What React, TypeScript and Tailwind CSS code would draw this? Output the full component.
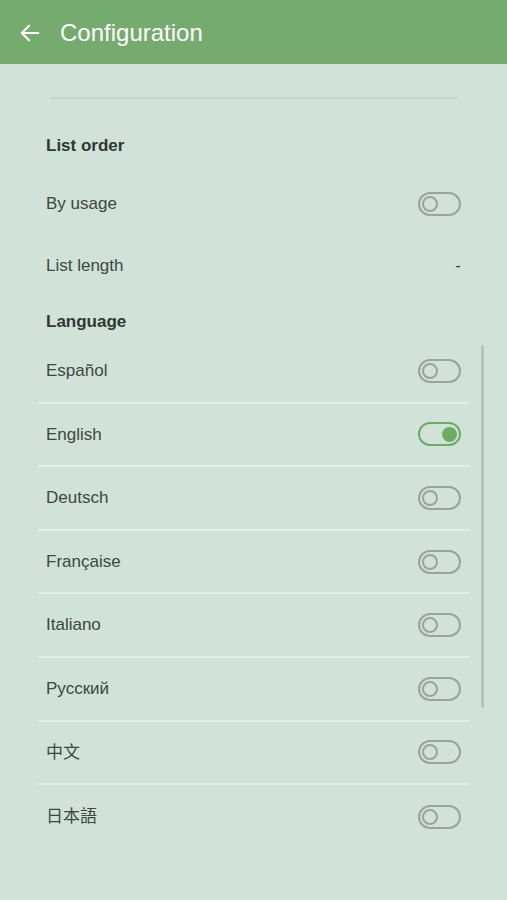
import React, { useState } from 'react';

const languages = ['Español', 'English', 'Deutsch', 'Française', 'Italiano', 'Русский', '中文', '日本語'];

const Toggle: React.FC<{ on: boolean; onClick?: () => void }> = ({ on, onClick }) => (
  <button
    onClick={onClick}
    className={`flex h-[24px] w-[43px] items-center rounded-full border-2 px-[2px] ${
      on ? 'justify-end border-[#6aad63]' : 'justify-start border-[#9aa39e]'
    }`}
  >
    {on ? (
      <span className="h-[15px] w-[15px] rounded-full bg-[#6aad63]" />
    ) : (
      <span className="h-[16px] w-[16px] rounded-full border-2 border-[#9aa39e]" />
    )}
  </button>
);

export default function App() {
  const [byUsage, setByUsage] = useState(false);
  const [lang, setLang] = useState('English');

  return (
    <div
      className="relative h-[900px] w-full overflow-hidden bg-[#d1e2d9] text-[#3c4842]"
      style={{ fontFamily: '"Liberation Sans", "Noto Sans CJK SC", sans-serif' }}
    >
      <header className="flex h-[64px] items-center bg-[#75ab6e] px-[19px] pt-[2px] text-white">
        <svg className="h-[22px] w-[22px]" viewBox="0 0 24 24" fill="none" stroke="currentColor" strokeWidth={2.2} strokeLinecap="round" strokeLinejoin="round">
          <path d="M21 12H3M11 4l-8 8 8 8" />
        </svg>
        <h1 className="ml-[19px] text-[24px]">Configuration</h1>
      </header>

      <div className="px-[38px]">
        <div className="mx-[12px] mt-[33px] h-[2px] bg-[#c2d6cb]" />

        <div className="px-[8px] pt-[34px] text-[17px] font-bold text-[#2f3833]">List order</div>

        <div className="flex h-[76px] items-center justify-between px-[8px] pt-[14px]">
          <span className="text-[17px]">By usage</span>
          <Toggle on={byUsage} onClick={() => setByUsage(!byUsage)} />
        </div>

        <div className="flex h-[62px] items-center justify-between px-[8px]">
          <span className="text-[17px]">List length</span>
          <span className="text-[17px]">-</span>
        </div>

        <div className="px-[8px] pt-[12px] text-[17px] font-bold text-[#2f3833]">Language</div>

        <div className="mt-[6px]">
          {languages.map((l, i) => (
            <div
              key={l}
              className={`flex h-[63.6px] items-center justify-between px-[8px] ${
                i < languages.length - 1 ? 'border-b-2 border-[#e4eee9]' : ''
              }`}
            >
              <span className="text-[17px]">{l}</span>
              <Toggle on={lang === l} onClick={() => setLang(l)} />
            </div>
          ))}
        </div>
      </div>

      <div className="absolute left-[481px] top-[345px] h-[363px] w-[3px] rounded-full bg-[#b3c5bb]" />
    </div>
  );
}
